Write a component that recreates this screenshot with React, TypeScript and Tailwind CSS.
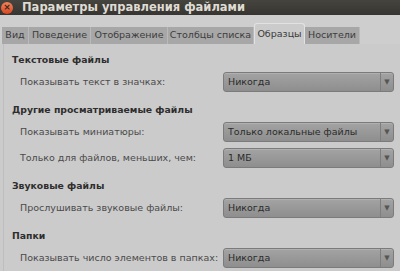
const tabs = [
  { label: "Вид", w: 27 },
  { label: "Поведение", w: 62 },
  { label: "Отображение", w: 77 },
  { label: "Столбцы списка", w: 86 },
  { label: "Образцы", w: 51, active: true },
  { label: "Носители", w: 55 },
]

const sections = [
  {
    title: "Текстовые файлы",
    rows: [{ label: "Показывать текст в значках:", value: "Никогда" }],
  },
  {
    title: "Другие просматриваемые файлы",
    rows: [
      { label: "Показывать миниатюры:", value: "Только локальные файлы" },
      { label: "Только для файлов, меньших, чем:", value: "1 МБ" },
    ],
  },
  {
    title: "Звуковые файлы",
    rows: [{ label: "Прослушивать звуковые файлы:", value: "Никогда" }],
  },
  {
    title: "Папки",
    rows: [{ label: "Показывать число элементов в папках:", value: "Никогда" }],
  },
]

function Combo({ value }: { value: string }) {
  return (
    <div className="flex h-[20px] w-[171px] shrink-0 rounded-[3px] border border-[#7b7b7b] bg-gradient-to-b from-[#a3a3a3] to-[#8e8e8e] shadow-[inset_0_1px_0_#b0b0b0]">
      <div className="flex-1 pl-[4px] leading-[18px] text-[#2b2b2b] truncate">{value}</div>
      <div className="flex w-[13px] items-center justify-center border-l border-[#7e7e7e] text-[7px] text-[#555]">
        ▼
      </div>
    </div>
  )
}

export default function App() {
  return (
    <div className="w-[400px] h-[271px] overflow-hidden bg-[#cbcbcb] font-['DejaVu_Sans',sans-serif] text-[9.5px] whitespace-nowrap">
      {/* Title bar */}
      <div className="flex h-[15px] items-center bg-gradient-to-b from-[#45443f] to-[#363531]">
        <div className="ml-[1px] flex h-[12px] w-[12px] items-center justify-center rounded-full bg-gradient-to-b from-[#f3825a] to-[#d8461c] text-[9px] font-bold leading-none text-[#3b2a20]">
          ×
        </div>
        <div className="ml-[9px] text-[11.5px] font-bold leading-none text-[#dfdbd2]">
          Параметры управления файлами
        </div>
      </div>

      {/* Tabs */}
      <div className="flex h-[29px] items-end bg-[#cecece] pl-[2px]">
        {tabs.map((t) =>
          t.active ? (
            <div
              key={t.label}
              className="flex h-[21px] shrink-0 items-center justify-center rounded-t-[3px] border-x border-t border-[#e2e2e2] bg-[#cbcbcb] text-[#3a3a3a]"
              style={{ width: t.w }}
            >
              {t.label}
            </div>
          ) : (
            <div
              key={t.label}
              className="flex h-[17px] shrink-0 items-center justify-center border-r border-[#b9b9b9] bg-[#a7a7a7] text-[#3c3c3c]"
              style={{ width: t.w }}
            >
              {t.label}
            </div>
          )
        )}
      </div>

      {/* Page */}
      <div className="ml-[3px] h-full border-l border-[#bebebe] pl-[8px] pt-[9px]">
        <div className="flex flex-col gap-[11px]">
          {sections.map((s) => (
            <div key={s.title} className="flex flex-col">
              <div className="h-[14px] leading-[14px] text-[9.3px] font-bold text-[#2e2e2e]">{s.title}</div>
              <div className="mt-[5px] flex flex-col gap-[6px]">
                {s.rows.map((r) => (
                  <div key={r.label} className="flex items-center">
                    <div className="w-[211px] shrink-0 pl-[8px] text-[#4a4a4a]">{r.label}</div>
                    <Combo value={r.value} />
                  </div>
                ))}
              </div>
            </div>
          ))}
        </div>
      </div>
    </div>
  )
}
